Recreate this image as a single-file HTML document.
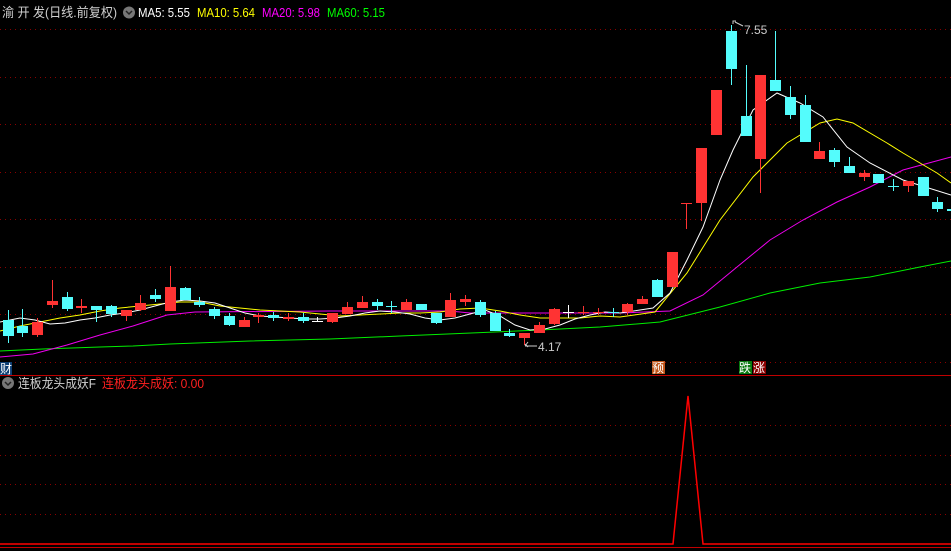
<!DOCTYPE html>
<html><head><meta charset="utf-8"><style>
html,body{margin:0;padding:0;background:#000;width:951px;height:551px;overflow:hidden}
svg{display:block}
text{font-family:"Liberation Sans","Noto Sans CJK SC",sans-serif}
</style></head><body>
<svg id="s" width="951" height="551" xmlns="http://www.w3.org/2000/svg">
<rect width="951" height="551" fill="#000"/>
<g id="grid" stroke="#8a0000" stroke-width="1" stroke-dasharray="1,4"></g>
<line x1="0" y1="375.5" x2="951" y2="375.5" stroke="#c00000"/>
<line x1="0" y1="547.5" x2="951" y2="547.5" stroke="#c00000"/>
<g id="ma" fill="none" stroke-width="1"></g>
<g id="cd"></g>
<text x="2" y="17" font-size="13" fill="#d0d0d0" textLength="115" lengthAdjust="spacingAndGlyphs">渝 开 发(日线.前复权)</text>
<circle cx="129" cy="12.5" r="6" fill="#777"/><path d="M126 11l3 3 3-3" stroke="#222" stroke-width="1.5" fill="none"/>
<text x="138" y="17" font-size="12.5" fill="#fff" textLength="52" lengthAdjust="spacingAndGlyphs">MA5: 5.55</text>
<text x="197" y="17" font-size="12.5" fill="#ffff00" textLength="58" lengthAdjust="spacingAndGlyphs">MA10: 5.64</text>
<text x="262" y="17" font-size="12.5" fill="#ff00ff" textLength="58" lengthAdjust="spacingAndGlyphs">MA20: 5.98</text>
<text x="327" y="17" font-size="12.5" fill="#00ff00" textLength="58" lengthAdjust="spacingAndGlyphs">MA60: 5.15</text>
<path d="M733 24v-3h3M735 22l8 4" stroke="#ccc" fill="none"/>
<text x="744" y="34" font-size="12" fill="#ccc">7.55</text>
<path d="M525 344l3 3M525 346h12M525 346l3-4" stroke="#ccc" fill="none"/>
<text x="538" y="351" font-size="12" fill="#ccc">4.17</text>
<rect x="0" y="362" width="12" height="13" fill="#0b3d72"/><text x="0" y="373" font-size="12" fill="#fff">财</text>
<rect x="652" y="361" width="13" height="13" fill="#c0561a"/><text x="652" y="372" font-size="12" fill="#fff">预</text>
<rect x="739" y="361" width="13" height="13" fill="#0a7a10"/><text x="739" y="372" font-size="12" fill="#fff">跌</text>
<rect x="753" y="361" width="13" height="13" fill="#8a0000"/><text x="753" y="372" font-size="12" fill="#fff">涨</text>
<circle cx="8" cy="383" r="6" fill="#777"/><path d="M5 382l3 3 3-3" stroke="#222" stroke-width="1.5" fill="none"/>
<text x="18" y="388" font-size="13" fill="#d0d0d0" textLength="78" lengthAdjust="spacingAndGlyphs">连板龙头成妖F</text>
<text x="102" y="388" font-size="13" fill="#ff2020" textLength="102" lengthAdjust="spacingAndGlyphs">连板龙头成妖: 0.00</text>
<polyline points="0,544 673,544 688,396 703,544 951,544" fill="none" stroke="#ff0000" stroke-width="1.5"/>
</svg>
<script>
var NS="http://www.w3.org/2000/svg";
function el(p,t,a){var e=document.createElementNS(NS,t);for(var k in a)e.setAttribute(k,a[k]);document.getElementById(p).appendChild(e);return e;}
[29,77,124,172,219,267,314,362,425,455,484,514].forEach(function(y){el("grid","line",{x1:0,x2:951,y1:y+.5,y2:y+.5});});
function pl(c,pts){el("ma","polyline",{points:pts,stroke:c});}
pl("#00ee00","0,351 43,349 100,347 133,346 170,344 250,341 330,339 400,336 495,332 540,330 600,327 660,322 720,307 770,293 820,283 870,277 920,267 951,261");
pl("#ee00ee","0,357 33,354 67,345 100,335 133,326 167,315 195,312 330,311 450,311 470,313 620,313 670,311 703,295 737,267 770,240 803,220 837,202 870,187 903,170 951,157");
pl("#ffff00","0,331 20,326 40,322 60,318 80,315 100,311 120,308 140,306 160,304 180,302 200,302 220,306 240,308 260,310 280,311 300,312 320,314 340,316 360,315 380,314 400,313 420,313 440,312 460,309 480,308 500,311 520,315 540,318 580,318 600,316 620,317 655,312 687,273 720,220 753,177 787,143 820,123 837,119 853,123 887,143 903,153 937,173 951,183");
pl("#ffffff","0,322 20,318 35,320 50,324 65,323 80,320 95,318 110,315 125,313 140,310 155,306 170,302 185,300 200,301 215,303 230,308 245,313 260,316 275,317 305,319 320,319 335,318 350,316 365,313 380,311 395,312 410,314 425,318 440,320 455,318 470,314 485,310 500,316 515,325 530,330 545,329 560,325 575,319 590,315 605,312 620,313 653,308 670,293 687,260 703,227 720,180 733,150 753,110 777,93 800,103 823,117 847,147 870,163 903,180 951,195");
var R="#ff3333",C="#54fcfc",W="#ffffff";
var d=[[320,336,310,343,C],[326,333,309,337,C],[322,335,318,337,R],[301,305,280,308,R],[297,309,292,311,C],[306,308,299,313,R],[306,310,306,322,C],[306,314,305,317,C],[310,316,310,321,R],[303,310,295,311,R],[295,299,289,302,C],[287,311,266,311,R],[288,300,287,300,C],[302,305,297,307,C],[309,316,307,319,C],[316,325,313,326,C],[320,327,317,327,R],[315,317,313,323,R],[315,318,312,321,C],[317,319,313,321,R],[317,321,313,323,C],[321,322,317,322,W],[313,322,313,323,R],[307,314,302,314,R],[302,308,296,308,R],[302,306,299,310,C],[306,307,301,313,C],[302,310,299,310,R],[304,310,304,310,C],[313,323,313,324,C],[300,317,293,317,R],[299,302,295,306,R],[302,315,300,317,C],[313,331,311,331,C],[333,336,329,337,C],[333,338,333,345,R],[325,333,322,333,R],[309,324,308,325,R],[312,313,305,318,W],[312,313,306,315,R],[312,313,308,315,R],[312,313,308,317,C],[304,312,303,315,R],[299,304,296,304,R],[280,297,279,297,C],[252,287,252,287,R],[203,204,203,229,R],[148,203,148,221,R],[90,135,90,135,R],[31,69,25,85,C],[116,136,65,136,C],[75,159,75,193,R],[80,91,31,91,C],[97,115,86,119,C],[105,142,95,142,C],[151,159,142,159,R],[150,162,148,167,C],[166,173,157,173,C],[173,177,170,181,R],[174,183,174,183,C],[186,187,179,191,C],[181,186,181,192,R],[177,196,177,196,C],[202,209,197,212,C],[209,211,209,211,C]];
d.forEach(function(c,i){var x=Math.round(7.5+14.76*i);
el("cd","line",{x1:x+.5,x2:x+.5,y1:c[2],y2:c[3],stroke:c[4]});
var h=c[1]-c[0];if(h<2){el("cd","line",{x1:x-5,x2:x+6,y1:c[0]+.5,y2:c[0]+.5,stroke:c[4]});}
else el("cd","rect",{x:x-5,y:c[0],width:11,height:h,fill:c[4]});});
</script>
</body></html>
